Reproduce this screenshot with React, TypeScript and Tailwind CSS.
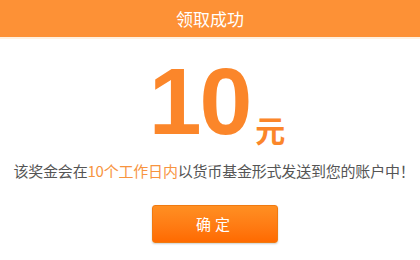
import React from "react";

export default function App() {
  return (
    <div className="w-[420px] h-[260px] bg-white overflow-hidden" style={{ fontFamily: '"Microsoft YaHei", "Noto Sans CJK SC", sans-serif' }}>
      <div className="h-[37px] bg-[#fd9136] flex items-center justify-center text-white text-[17px] leading-none">
        领取成功
      </div>
      <div className="h-[2px] bg-[#fff1e0]" />
      <div className="flex items-end justify-center mt-[30px] h-[80px] pl-[14px]">
        <span className="text-[#fb862a] text-[95px] leading-none font-bold tracking-[-2px]" style={{ fontFamily: '"Liberation Sans", Arial, sans-serif' }}>10</span>
        <span className="text-[#fb862a] text-[30px] leading-none font-bold ml-[5px] mb-[5px]">元</span>
      </div>
      <div className="mt-[14px] pl-[8px] text-center text-[15px] leading-none text-[#555] tracking-[-0.2px]">
        该奖金会在<span className="text-[#f7943f]">10个工作日内</span>以货币基金形式发送到您的账户中！
      </div>
      <div className="flex justify-center mt-[27px] pl-[10px]">
        <button className="w-[126px] h-[38px] rounded-[3px] border border-[#f07a10] bg-gradient-to-b from-[#ff8f22] to-[#ff6a00] text-white text-[15px] tracking-[4px] shadow-[0_1px_2px_rgba(0,0,0,0.2)]">
          确定
        </button>
      </div>
    </div>
  );
}
